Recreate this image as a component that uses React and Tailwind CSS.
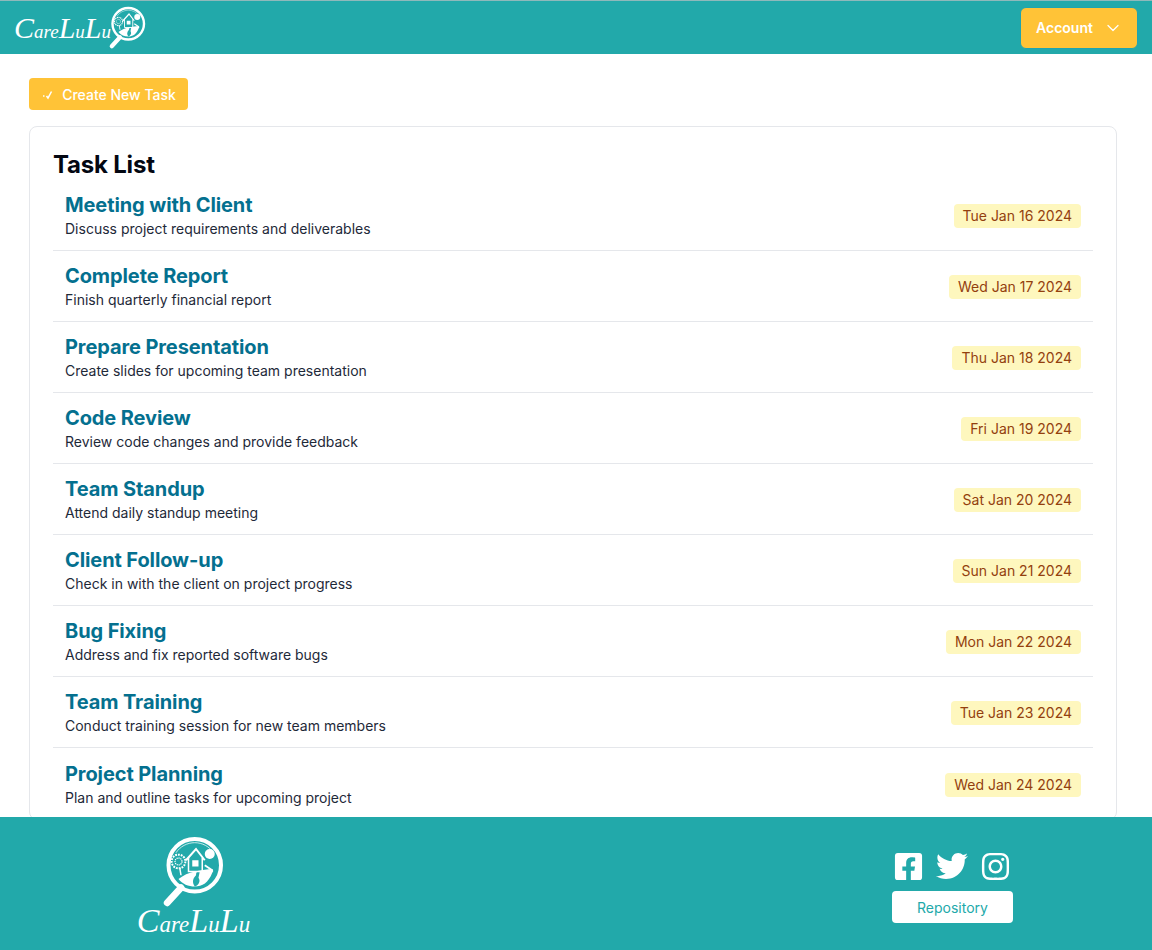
import { FaFacebookSquare, FaTwitter, FaInstagram } from 'react-icons/fa';
import { ChevronDown } from 'lucide-react';

const tasks = [
  { title: 'Meeting with Client', desc: 'Discuss project requirements and deliverables', date: 'Tue Jan 16 2024' },
  { title: 'Complete Report', desc: 'Finish quarterly financial report', date: 'Wed Jan 17 2024' },
  { title: 'Prepare Presentation', desc: 'Create slides for upcoming team presentation', date: 'Thu Jan 18 2024' },
  { title: 'Code Review', desc: 'Review code changes and provide feedback', date: 'Fri Jan 19 2024' },
  { title: 'Team Standup', desc: 'Attend daily standup meeting', date: 'Sat Jan 20 2024' },
  { title: 'Client Follow-up', desc: 'Check in with the client on project progress', date: 'Sun Jan 21 2024' },
  { title: 'Bug Fixing', desc: 'Address and fix reported software bugs', date: 'Mon Jan 22 2024' },
  { title: 'Team Training', desc: 'Conduct training session for new team members', date: 'Tue Jan 23 2024' },
  { title: 'Project Planning', desc: 'Plan and outline tasks for upcoming project', date: 'Wed Jan 24 2024' },
];

// magnifying glass with the little house scene inside
const Magnifier = ({ className }) => (
  <svg viewBox="0 0 60 60" className={className}>
    <line x1="13" y1="55" x2="24" y2="43" stroke="#fff" strokeWidth="5.500" strokeLinecap="round" />
    <circle cx="35" cy="25" r="21" fill="none" stroke="#fff" strokeWidth="3.200" />
    <path d="M20 15a18 18 0 0 1 30 0" fill="none" stroke="#fff" strokeWidth="0.600" />
    <path d="M22 36c4-3 8-5 13-6 6-1 10-2 14-2 1 1 1 2 0 3-3 8-8 11-14 11-5 0-10-2-13-6z" fill="#fff" />
    <path d="M35 42c-2-3-2-6 1-9 0-3 2-4 3-3l-1 5c2 3 0 6-3 7z" fill="#22a9aa" />
    <circle cx="22" cy="22" r="5.500" fill="none" stroke="#fff" strokeWidth="1.600" strokeDasharray="1.500 0.800" />
    <circle cx="22" cy="22" r="2.800" fill="none" stroke="#fff" strokeWidth="1" strokeDasharray="1 0.600" />
    <line x1="23" y1="27" x2="24" y2="33" stroke="#fff" strokeWidth="1.200" />
    <path d="M28 21l8-9 7 9" fill="none" stroke="#fff" strokeWidth="1.600" />
    <path d="M30 19v11h11V19" fill="none" stroke="#fff" strokeWidth="1.200" />
    <rect x="33" y="21" width="5" height="5" fill="#fff" />
    <circle cx="47" cy="16" r="4" fill="#fff" />
    <line x1="43" y1="25" x2="49" y2="29" stroke="#fff" strokeWidth="1.500" />
  </svg>
);

const LogoText = ({ caps, lower }) => (
  <span className="font-['Liberation_Serif',serif] italic font-normal text-white leading-none whitespace-nowrap" style={{ fontSize: lower }}>
    <span style={{ fontSize: caps }}>C</span>are<span style={{ fontSize: caps }}>L</span>u<span style={{ fontSize: caps }}>L</span>u
  </span>
);

const App = () => {
  return (
    <div className="h-[950px] flex flex-col overflow-hidden bg-white font-['Inter',sans-serif]">
      <nav className="h-[54px] shrink-0 bg-[#22a9aa] border-t border-[#8fb9bb] flex items-center justify-between pl-[14px] pr-[14px]">
        <div className="flex items-center">
          <LogoText caps={30} lower={19} />
          <Magnifier className="w-[45px] h-[45px] -ml-[9px] -mt-[1px]" />
        </div>
        <button className="w-[118px] h-[42px] pl-px rounded-md bg-[#ffc337] border border-[#1fa3b0] text-white text-sm font-semibold flex items-center justify-center gap-[10px]">
          Account
          <ChevronDown size={20} strokeWidth={1.500} />
        </button>
      </nav>

      <main className="flex-1 min-h-0 overflow-hidden px-[29px] pt-6 w-[1146px]">
        <button className="h-8 w-[159px] pl-px rounded bg-[#ffc337] text-white text-sm font-medium flex items-center justify-center gap-2 pt-px">
          <svg viewBox="0 0 12 12" className="w-3 h-3" fill="none" stroke="#fff" strokeWidth="1.500">
            <path d="M4.500 7l1.500 2 3.500-6.500" />
            <path d="M1 7h1.500" />
          </svg>
          Create New Task
        </button>
        <div className="mt-4 border border-gray-200 rounded-lg px-[23px] pt-[23px]">
          <h2 className="text-2xl font-bold tracking-[-0.2px] leading-[30px] text-gray-950">Task List</h2>
          <ul>
            {tasks.map((task, i) => (
              <li key={task.title} className={`h-[71px] px-3 flex items-center justify-between ${i < tasks.length - 1 ? 'border-b border-gray-200' : ''}`}>
                <div>
                  <h3 className="text-xl font-bold tracking-[-0.1px] leading-7 text-[#04708f]">{task.title}</h3>
                  <p className="text-sm leading-5 text-gray-800">{task.desc}</p>
                </div>
                <span className="mt-0.5 h-6 px-[9px] rounded-sm bg-[#fef7be] text-[#93400e] text-sm leading-6">{task.date}</span>
              </li>
            ))}
          </ul>
        </div>
      </main>

      <footer className="h-[133px] shrink-0 bg-[#22a9aa] flex justify-between pl-[137px] pr-[139px]">
        <div className="flex flex-col items-center pt-[17px] w-[113px]">
          <Magnifier className="w-[75px] h-[75px] -ml-[10px] shrink-0" />
          <div className="-mt-[5px]">
            <LogoText caps={34} lower={23} />
          </div>
        </div>
        <div className="flex flex-col items-center pt-[33px] gap-[9px]">
          <div className="flex items-center gap-3 text-white -ml-px">
            <FaFacebookSquare size={31} />
            <FaTwitter size={32} />
            <FaInstagram size={31} />
          </div>
          <button className="w-[121px] h-[32px] pt-px rounded bg-white text-[#22a9aa] text-sm">Repository</button>
        </div>
      </footer>
    </div>
  );
};

export default App;
